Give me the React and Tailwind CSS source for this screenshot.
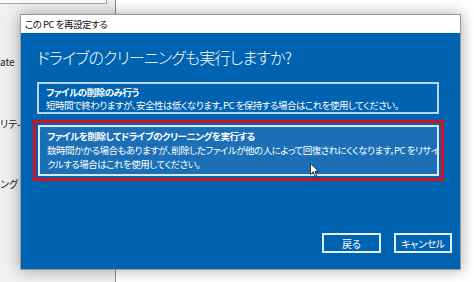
import React from "react";

const jp = "font-['Noto_Sans_CJK_JP',sans-serif] [font-feature-settings:'palt']";

export default function App() {
  return (
    <div className={`relative w-[474px] h-[282px] overflow-hidden bg-white flex ${jp}`}>
      {/* background window sidebar */}
      <div className="w-[116px] h-full bg-[#f0f0f0] border-r border-[#8a8a8a] flex flex-col text-[10px] leading-[12px] text-[#222]">
        <div className="w-[107px] h-[4px] bg-[#fbfbfb] border-b border-r border-[#a8a8a8]" />
        <div className="mt-[52px] whitespace-nowrap">ate</div>
        <div className="mt-[50px] whitespace-nowrap">リティ</div>
        <div className="mt-[48px] whitespace-nowrap">ング</div>
      </div>
      <div className="flex-1 bg-white" />

      {/* dialog */}
      <div className="absolute left-[20px] top-[14px] w-[441px] h-[256px] flex flex-col border border-[#9a9a9a] shadow-[0_0_14px_rgba(0,0,0,0.35)]">
        <div className="h-[18px] bg-white flex items-center pl-[4px] text-[9.5px] tracking-[-0.5px] text-[#111] whitespace-nowrap">
          この PC を再設定する
        </div>
        <div className="flex-1 bg-[#0063b1] flex flex-col text-white">
          <div className="flex flex-col pl-[16px] pr-[21px]">
            <div className="mt-[14px] text-[16px] leading-[20px] tracking-[-0.8px] font-light whitespace-nowrap">
              ドライブのクリーニングも実行しますか?
            </div>
            <div className="mt-[15px] border-2 border-[#b9d5ee] pl-[7px] pt-[2px] text-[9.5px] leading-[13px] tracking-[-0.5px] whitespace-nowrap">
              <div className="font-bold">ファイルの削除のみ行う</div>
              <div>短時間で終わりますが、安全性は低くなります。PC を保持する場合はこれを使用してください。</div>
            </div>
            <div className="mt-[6px] -ml-[4px] -mr-[5px] border-[3px] border-[#d4101e] p-[2px]">
              <div className="border-2 border-[#dbe9f6] bg-[#1a6fb6] pl-[7px] pt-[2px] pb-[3px] text-[9.5px] leading-[14px] tracking-[-0.5px] whitespace-nowrap">
                <div className="font-bold">ファイルを削除してドライブのクリーニングを実行する</div>
                <div>数時間かかる場合もありますが、削除したファイルが他の人によって回復されにくくなります。PC をリサイ</div>
                <div>クルする場合はこれを使用してください。</div>
              </div>
            </div>
          </div>
          <div className="mt-auto mb-[16px] pr-[8px] flex justify-end gap-[13px]">
            <div className="w-[59px] h-[20px] border-2 border-[#e6f0fa] flex items-center justify-center text-[10px]">
              戻る
            </div>
            <div className="w-[58px] h-[20px] border-2 border-[#e6f0fa] flex items-center justify-center text-[10px] tracking-[-0.3px]">
              キャンセル
            </div>
          </div>
        </div>
      </div>

      {/* mouse cursor */}
      <svg className="absolute left-[310px] top-[163px]" width="9" height="14" viewBox="0 0 12 19">
        <path d="M0.5 0.5 L0.5 15.5 L4.2 12 L6.8 18 L9 17 L6.5 11.2 L11.5 11.2 Z" fill="white" stroke="black" strokeWidth="1" strokeLinejoin="round" />
      </svg>
    </div>
  );
}
